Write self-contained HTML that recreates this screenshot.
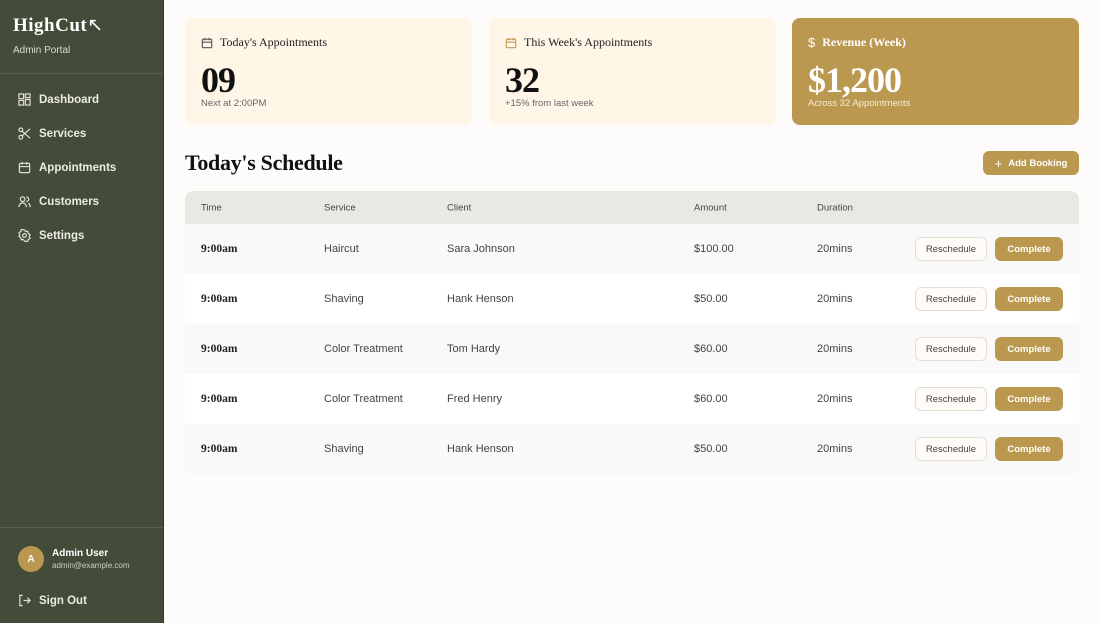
<!DOCTYPE html>
<html><head><style>
*{box-sizing:border-box;margin:0;padding:0}
body{width:1100px;height:623px;overflow:hidden;font-family:"Liberation Sans",sans-serif;background:#fdfcfb;position:relative}
.sb{position:absolute;left:0;top:0;width:164px;height:623px;background:#434c38;border-right:1px solid #2f3527;color:#e8e6df}
.logo{position:absolute;left:13px;top:14px;font-family:"Liberation Serif",serif;font-weight:bold;font-size:19px;color:#fff;letter-spacing:0.5px}
.portal{position:absolute;left:13px;top:45px;font-size:10px;color:#dcdad2}
.sep{position:absolute;left:0;right:0;height:1px;background:#566049}
.nav{position:absolute;left:18px;font-size:11.5px;font-weight:bold;color:#ecebe4;display:flex;align-items:center;gap:8px}
.nav svg{width:13px;height:13px;stroke:#e0ded6;fill:none;stroke-width:1.3}
.card{position:absolute;top:18px;width:287px;height:107px;border-radius:8px;background:#fff6e8}
.card .t{position:absolute;left:16px;top:17px;font-family:"Liberation Serif",serif;font-size:12px;color:#222;display:flex;align-items:center;gap:7px}
.card .n{position:absolute;left:16px;top:44px;font-family:"Liberation Serif",serif;font-weight:bold;font-size:36px;line-height:1;color:#111;letter-spacing:-1px}
.card .s{position:absolute;left:16px;top:80px;font-size:9.5px;color:#666}
h1{position:absolute;left:185px;top:150px;font-family:"Liberation Serif",serif;font-size:22px;font-weight:bold;color:#111;letter-spacing:-0.3px}
.add{position:absolute;left:983px;top:151px;width:96px;height:24px;border-radius:6px;background:#bb984f;color:#fff;font-size:9.5px;font-weight:bold;display:flex;align-items:center;justify-content:center;gap:6px}
.tbl{position:absolute;left:185px;top:191px;width:894px}
.hd{height:33px;background:#e9e9e4;border-radius:8px 8px 0 0;position:relative;font-size:9.5px;color:#444}
.row{height:50px;position:relative;font-size:11px;color:#444}
.c{position:absolute;top:50%;transform:translateY(-50%)}
.tm{font-family:"Liberation Serif",serif;font-weight:bold;font-size:11.5px;color:#222}
.rs{position:absolute;left:730px;top:13px;width:72px;height:24px;border:1px solid #e3ddd3;border-radius:6px;background:#fffcf7;font-size:9.5px;color:#444;display:flex;align-items:center;justify-content:center}
.cp{position:absolute;left:810px;top:13px;width:68px;height:24px;border-radius:6px;background:#bb984f;color:#fff;font-size:9.5px;font-weight:bold;display:flex;align-items:center;justify-content:center}
</style></head><body>
<div class="sb">
<div class="logo">HighCut<span style="font-weight:normal">↖</span></div>
<div class="portal">Admin Portal</div>
<div class="sep" style="top:73px"></div>
<div class="nav" style="top:93px"><svg viewBox="0 0 14 14"><rect x="1" y="1" width="5" height="5"/><rect x="8" y="1" width="5" height="4"/><rect x="1" y="8" width="5" height="5"/><rect x="8" y="7" width="5" height="6"/></svg>Dashboard</div>
<div class="nav" style="top:127px"><svg viewBox="0 0 14 14"><circle cx="3" cy="3" r="2"/><circle cx="3" cy="11" r="2"/><path d="M4.5 4.5L13 12M4.5 9.5L13 2"/></svg>Services</div>
<div class="nav" style="top:161px"><svg viewBox="0 0 14 14"><rect x="1.5" y="2.5" width="11" height="10" rx="1"/><path d="M1.5 6h11M4.5 1v3M9.5 1v3"/></svg>Appointments</div>
<div class="nav" style="top:195px"><svg viewBox="0 0 14 14"><circle cx="5" cy="4.5" r="2.5"/><path d="M1 13c0-3 2-4.5 4-4.5s4 1.5 4 4.5M9 2a2.5 2.5 0 010 5M11 9c1.5.5 2 2 2 4"/></svg>Customers</div>
<div class="nav" style="top:229px"><svg viewBox="0 0 14 14"><circle cx="7" cy="7" r="2"/><path d="M7 1l1.3 1.8 2.2-.4.4 2.2L13 6l-1 2 1 2-2.1 1.4-.4 2.2-2.2-.4L7 13l-1.3-1.8-2.2.4-.4-2.2L1 8l1-2-1-2 2.1-1.4.4-2.2 2.2.4z"/></svg>Settings</div>
<div class="sep" style="top:527px"></div>
<div style="position:absolute;left:18px;top:546px;width:26px;height:26px;border-radius:50%;background:#bb984f;color:#fff;font-size:10px;font-weight:bold;display:flex;align-items:center;justify-content:center">A</div>
<div style="position:absolute;left:52px;top:548px;font-size:10px;font-weight:bold;color:#fff">Admin User</div>
<div style="position:absolute;left:52px;top:561px;font-size:8px;color:#cfcdc4">admin@example.com</div>
<div class="nav" style="top:594px"><svg viewBox="0 0 14 14"><path d="M5 1.5H2v11h3M6 7h7M10 4l3 3-3 3"/></svg>Sign Out</div>
</div>

<div class="card" style="left:185px"><div class="t"><svg width="12" height="12" viewBox="0 0 14 14" fill="none" stroke="#555" stroke-width="1.3"><rect x="1.5" y="2.5" width="11" height="10" rx="1"/><path d="M1.5 6h11M4.5 1v3M9.5 1v3"/></svg>Today's Appointments</div><div class="n">09</div><div class="s">Next at 2:00PM</div></div>
<div class="card" style="left:489px"><div class="t"><svg width="12" height="12" viewBox="0 0 14 14" fill="none" stroke="#c49a5a" stroke-width="1.3"><rect x="1.5" y="2.5" width="11" height="10" rx="1"/><path d="M1.5 6h11M4.5 1v3M9.5 1v3"/></svg>This Week's Appointments</div><div class="n">32</div><div class="s">+15% from last week</div></div>
<div class="card" style="left:792px;background:#bb984f"><div class="t" style="color:#fff;font-weight:bold"><span style="font-family:'Liberation Sans';font-weight:normal;font-size:13px">$</span>Revenue (Week)</div><div class="n" style="color:#fff">$1,200</div><div class="s" style="color:#f6ecd8">Across 32 Appointments</div></div>

<h1>Today's Schedule</h1>
<div class="add"><span style="font-size:13px;font-weight:normal">+</span>Add Booking</div>

<div class="tbl">
<div class="hd"><span class="c" style="left:16px">Time</span><span class="c" style="left:139px">Service</span><span class="c" style="left:262px">Client</span><span class="c" style="left:509px">Amount</span><span class="c" style="left:632px">Duration</span></div>
<div>
<div class="row" style="background:#faf9f9"><span class="c tm" style="left:16px">9:00am</span><span class="c" style="left:139px">Haircut</span><span class="c" style="left:262px">Sara Johnson</span><span class="c" style="left:509px">$100.00</span><span class="c" style="left:632px">20mins</span><div class="rs">Reschedule</div><div class="cp">Complete</div></div>
<div class="row" style="background:#fff"><span class="c tm" style="left:16px">9:00am</span><span class="c" style="left:139px">Shaving</span><span class="c" style="left:262px">Hank Henson</span><span class="c" style="left:509px">$50.00</span><span class="c" style="left:632px">20mins</span><div class="rs">Reschedule</div><div class="cp">Complete</div></div>
<div class="row" style="background:#faf9f9"><span class="c tm" style="left:16px">9:00am</span><span class="c" style="left:139px">Color Treatment</span><span class="c" style="left:262px">Tom Hardy</span><span class="c" style="left:509px">$60.00</span><span class="c" style="left:632px">20mins</span><div class="rs">Reschedule</div><div class="cp">Complete</div></div>
<div class="row" style="background:#fff"><span class="c tm" style="left:16px">9:00am</span><span class="c" style="left:139px">Color Treatment</span><span class="c" style="left:262px">Fred Henry</span><span class="c" style="left:509px">$60.00</span><span class="c" style="left:632px">20mins</span><div class="rs">Reschedule</div><div class="cp">Complete</div></div>
<div class="row" style="background:#faf9f9"><span class="c tm" style="left:16px">9:00am</span><span class="c" style="left:139px">Shaving</span><span class="c" style="left:262px">Hank Henson</span><span class="c" style="left:509px">$50.00</span><span class="c" style="left:632px">20mins</span><div class="rs">Reschedule</div><div class="cp">Complete</div></div>
</div></div>
</body></html>
